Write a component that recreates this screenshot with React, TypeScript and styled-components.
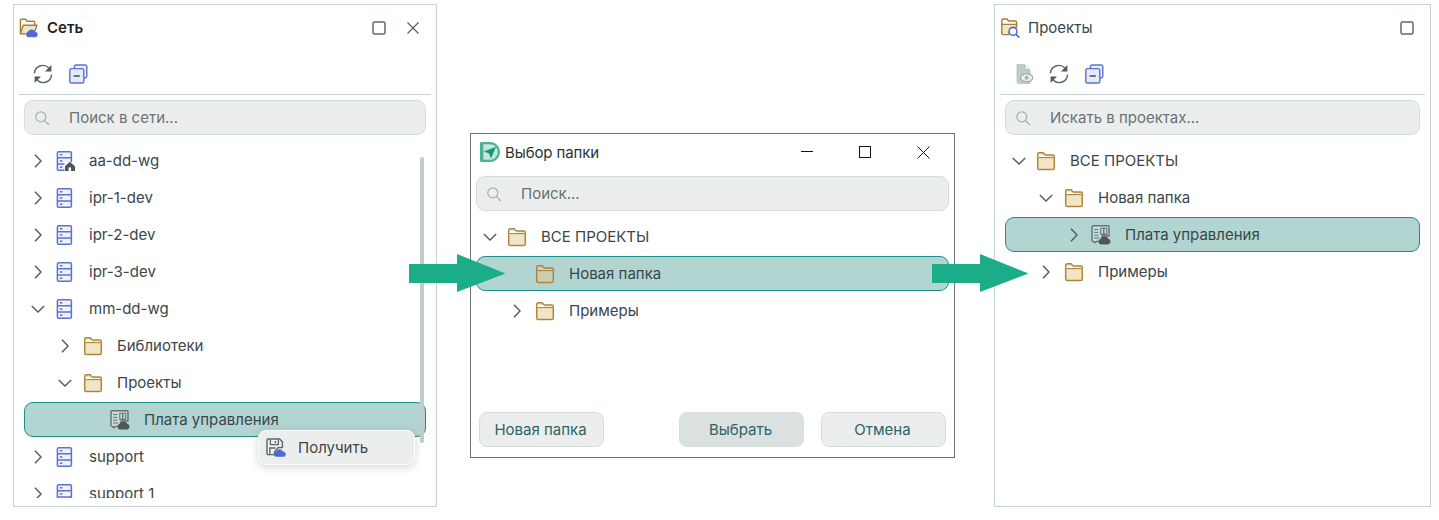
import React from "react";
import styled, { createGlobalStyle } from "styled-components";

const Global = createGlobalStyle`
  html, body { margin: 0; padding: 0; background: #fff; }
  body { font-family: Inter, "Noto Sans", "Liberation Sans", sans-serif; font-size: 15px; color: #3a4749; }
  #root { width: 1439px; height: 520px; overflow: hidden; }
`;

const Page = styled.div`
  position: relative;
  display: flex;
  align-items: flex-start;
  width: 1439px;
  height: 520px;
  padding: 4px 0 0 13px;
  box-sizing: border-box;
  overflow: hidden;
  background: #fff;
`;

const Panel = styled.section<{ $width: number; $gap: number }>`
  position: relative;
  display: flex;
  flex-direction: column;
  flex: none;
  box-sizing: border-box;
  width: ${(p) => p.$width}px;
  height: 503px;
  margin-left: ${(p) => p.$gap}px;
  border: 1px solid #c5d3d1;
`;

const Dialog = styled.section`
  display: flex;
  flex-direction: column;
  flex: none;
  box-sizing: border-box;
  width: 485px;
  height: 325px;
  margin: 129px 0 0 33px;
  border: 1px solid #707070;
`;

const TitleBar = styled.header`
  display: flex;
  align-items: center;
  flex: none;
  box-sizing: border-box;
  height: 46px;
  padding: 0 6px 1px 5px;
`;

const TitleText = styled.span<{ $bold?: boolean }>`
  margin-left: 8px;
  color: ${(p) => (p.$bold ? "#1d2325" : "#3a4749")};
  font-weight: ${(p) => (p.$bold ? 600 : 400)};
`;

const TitleButtons = styled.div`
  display: flex;
  margin-left: auto;
`;

const TitleButton = styled.button`
  display: flex;
  align-items: center;
  justify-content: center;
  width: 34px;
  height: 34px;
  padding: 0;
  border: 0;
  background: none;
`;

const DialogTitleBar = styled.header`
  display: flex;
  align-items: center;
  flex: none;
  height: 36px;
  padding: 0 2px 0 9px;
`;

const DialogTitleText = styled.span`
  margin-left: 5px;
  color: #2a3436;
  letter-spacing: -0.1px;
`;

const WindowButton = styled.button`
  display: flex;
  align-items: center;
  justify-content: center;
  width: 58px;
  height: 36px;
  padding: 0;
  border: 0;
  background: none;
`;

const Toolbar = styled.div`
  display: flex;
  align-items: center;
  flex: none;
  gap: 15px;
  height: 41px;
  margin: 0 5px;
  padding: 2px 0 0 14px;
  border-bottom: 1px solid #c5d3d1;
`;

const Search = styled.div<{ $top: number }>`
  display: flex;
  align-items: center;
  flex: none;
  gap: 19px;
  box-sizing: border-box;
  height: 35px;
  margin: ${(p) => p.$top}px 5px 8px;
  padding-left: 9px;
  border: 1px solid #d4dedc;
  border-radius: 9px;
  background: #ebeeed;
  color: #687375;
`;

const PanelSearch = styled(Search)`
  margin-left: 10px;
  margin-right: 10px;
`;

const Tree = styled.div<{ $inset: number }>`
  display: flex;
  flex-direction: column;
  flex: none;
  gap: 2px;
  height: 355px;
  margin: 0 ${(p) => p.$inset}px;
  overflow: hidden;
`;

const DialogTree = styled(Tree)`
  flex: 1;
  height: auto;
`;

const Row = styled.div<{ $level: number; $selected?: boolean }>`
  display: flex;
  align-items: center;
  flex: none;
  box-sizing: border-box;
  height: 35px;
  padding-left: ${(p) => 5 + [0, 27, 55][p.$level]}px;
  border: 1px solid ${(p) => (p.$selected ? "#1d8f8b" : "transparent")};
  border-radius: 9px;
  background: ${(p) => (p.$selected ? "#b2d5d2" : "transparent")};
`;

const Chevron = styled.span<{ $level: number }>`
  display: flex;
  align-items: center;
  justify-content: center;
  flex: none;
  width: 16px;
  height: 16px;
  margin-right: ${(p) => (p.$level === 1 ? 10 : 9)}px;
`;

const RowIcon = styled.span`
  display: flex;
  flex: none;
  width: 20px;
  height: 20px;
  margin-right: 14px;
`;

const Footer = styled.footer`
  display: flex;
  flex: none;
  gap: 17px;
  padding: 0 8px 10px;
`;

const Button = styled.button<{ $primary?: boolean; $push?: boolean }>`
  box-sizing: border-box;
  width: 125px;
  height: 35px;
  margin-left: ${(p) => (p.$push ? "auto" : 0)};
  padding: 0 2px 0 0;
  border: 1px solid #d4dedc;
  border-radius: 8px;
  background: ${(p) => (p.$primary ? "#dbe0e0" : "#ebeeed")};
  color: #2c6468;
  font: inherit;
`;

const Scrollbar = styled.div`
  position: absolute;
  left: 406px;
  top: 152px;
  width: 4px;
  height: 286px;
  border-radius: 2px;
  background: #c0cdcc;
`;

const ContextMenu = styled.div`
  position: absolute;
  left: 244px;
  top: 425px;
  display: flex;
  align-items: center;
  gap: 12px;
  box-sizing: border-box;
  width: 157px;
  height: 35px;
  padding-left: 7px;
  border: 1px solid #fff;
  border-radius: 8px;
  background: #ebeeed;
  box-shadow: 0 2px 8px rgba(40, 60, 60, 0.22);
`;

const FlowArrow = styled.svg<{ $left: number }>`
  position: absolute;
  left: ${(p) => p.$left}px;
  top: 254px;
`;

const Folder = ({ dim }: { dim?: boolean }) => (
  <svg width="20" height="20" viewBox="0 0 20 20">
    <path
      d="M1.7 17V3.4C1.7 2.5 2.4 1.8 3.3 1.8H7.2L9 3.9H16.7C17.6 3.9 18.3 4.6 18.3 5.5V17C18.3 17.9 17.6 18.6 16.7 18.6H3.3C2.4 18.6 1.7 17.9 1.7 17Z"
      fill={dim ? "#cccfae" : "#f1e5c6"}
      stroke="#ab863f"
      strokeWidth="1.5"
    />
    <path d="M2.6 4.2H8.6L9.8 5.8H17.4V6.2H2.6Z" fill={dim ? "#b2d5d2" : "#fff"} />
    <path d="M2.4 6.6H17.6" stroke="#ab863f" strokeWidth="1.1" fill="none" />
  </svg>
);

const Server = ({ home }: { home?: boolean }) => (
  <svg width="20" height="20" viewBox="0 0 20 20">
    <rect x="2.4" y="0.8" width="14" height="18.4" rx="1.3" fill="#f0f3fd" stroke="#5a72d6" strokeWidth="1.5" />
    <path d="M2.6 6.8H16.2M2.6 13H16.2" stroke="#5a72d6" strokeWidth="1.5" />
    <path d="M4.9 3.8H7.4M4.9 10H7.4M4.9 16.2H7.4" stroke="#6b7678" strokeWidth="1.4" />
    {home && (
      <g>
        <rect x="9.5" y="11" width="10.5" height="9" fill="#fff" />
        <path d="M14.8 10.8L20 15.2V20H10V15.2Z" fill="#4c5658" />
        <rect x="13.6" y="16.4" width="2.4" height="3.6" fill="#fff" />
      </g>
    )}
  </svg>
);

const Board = () => (
  <svg width="20" height="20" viewBox="0 0 20 20" fill="none">
    <path d="M1 1.8C1 1.2 1.4.8 2 .8H17C17.6.8 18 1.2 18 1.8V11H11V16.4H5.6L4 17.8L2.4 16.4H2C1.4 16.4 1 16 1 15.4Z" fill="#c5dcd9" stroke="#667274" strokeWidth="1.4" strokeLinejoin="round" />
    <path d="M3.2 4.6H7.4M3.2 7.4H7.4M3.2 10.2H7.4M3.2 13H8.6" stroke="#667274" strokeWidth="1" />
    <path d="M9.8 3.2H15.8V9.4H9.8Z" stroke="#667274" strokeWidth="1.1" />
    <path d="M12.8 3.4V9" stroke="#667274" strokeWidth="1.4" />
    <path d="M10 19.4A2.9 2.9 0 0 1 9.8 13.7A4.2 4.2 0 0 1 17.4 13.8A2.9 2.9 0 0 1 17.4 19.4Z" fill="#4d585a" />
  </svg>
);

const Chev = ({ open }: { open?: boolean }) => (
  <svg width="16" height="16" viewBox="0 0 16 16" fill="none" stroke="#4f5b5d" strokeWidth="1.4">
    {open ? <path d="M1.8 5L8 11L14.2 5" /> : <path d="M5 1.8L11 8L5 14.2" />}
  </svg>
);

const GlassIcon = styled.svg`
  flex: none;
`;

const SearchGlass = () => (
  <GlassIcon width="16" height="16" viewBox="0 0 16 16" fill="none" stroke="#a7b0b1" strokeWidth="1.2">
    <circle cx="6.8" cy="6.8" r="5" />
    <path d="M10.5 10.5L15 15" />
  </GlassIcon>
);

const Refresh = () => (
  <svg width="20" height="20" viewBox="0 0 20 20" fill="none">
    <path d="M1.4 9.4A8.4 8.4 0 0 1 15.8 4" stroke="#5a6668" strokeWidth="1.4" />
    <path d="M18.6 10.6A8.4 8.4 0 0 1 4.2 16" stroke="#5a6668" strokeWidth="1.4" />
    <path d="M18.4 1V7.4H12Z" fill="#4f5b5d" />
    <path d="M1.6 19V12.6H8Z" fill="#4f5b5d" />
  </svg>
);

const Collapse = () => (
  <svg width="20" height="20" viewBox="0 0 20 20" fill="none" stroke="#5a72d6" strokeWidth="1.4">
    <path d="M6.4 4.2V2.6C6.4 1.7 7.1 1 8 1H17.2C18.1 1 18.8 1.7 18.8 2.6V12.2C18.8 13.1 18.1 13.8 17.2 13.8H15.8" fill="#eef1fc" />
    <rect x="1.8" y="4.6" width="14" height="14.4" rx="1.8" fill="#e6ebfb" />
    <path d="M5.6 12H11.8" stroke="#4f5b5d" strokeWidth="1.6" />
  </svg>
);

const FolderCloud = () => (
  <svg width="20" height="20" viewBox="0 0 20 20">
    <path d="M1.4 15.5V2.6C1.4 1.8 2 1.2 2.8 1.2H6.6L8.2 3.2H14.4C15.2 3.2 15.8 3.8 15.8 4.6V7" fill="#fff" stroke="#a67f3a" strokeWidth="1.4" />
    <path d="M1.4 15.8L4.2 7.2H18L15 15.8Z" fill="#f1e5c6" stroke="#a67f3a" strokeWidth="1.4" strokeLinejoin="round" />
    <path d="M9 19.4A3 3 0 0 1 8.8 13.6A4.3 4.3 0 0 1 16.6 13.6A3 3 0 0 1 17 19.4Z" fill="#4e68d4" stroke="#fff" strokeWidth="0.6" />
  </svg>
);

const FolderLens = () => (
  <svg width="20" height="20" viewBox="0 0 20 20" fill="none">
    <path d="M1.8 16V2.4C1.8 1.6 2.4 1 3.2 1H7L8.6 3H15.2C16 3 16.6 3.6 16.6 4.4V8" fill="#fff" stroke="#a67f3a" strokeWidth="1.4" />
    <path d="M1.8 6.4H16.6V9.4H11L8.6 16.6H3.2C2.4 16.6 1.8 16 1.8 15.2Z" fill="#f1e5c6" stroke="#a67f3a" strokeWidth="1.3" />
    <circle cx="13" cy="13.4" r="3.9" fill="#fff" stroke="#4e68d4" strokeWidth="1.5" />
    <path d="M15.8 16.2L19.4 19.6" stroke="#4e68d4" strokeWidth="1.6" />
  </svg>
);

const FileEye = () => (
  <svg width="20" height="20" viewBox="0 0 20 20">
    <path d="M3 .6H10.6L16 5.8V19.4H4.4C3.6 19.4 3 18.8 3 18Z" fill="#c3ccca" stroke="#b4bdbc" strokeWidth="0.8" />
    <path d="M10.6.8V5.8H15.8" fill="#e6eae9" stroke="#aab4b3" strokeWidth="0.8" />
    <ellipse cx="12.6" cy="13.8" rx="6.2" ry="4" fill="#e9eded" stroke="#98a3a2" strokeWidth="1.1" />
    <circle cx="12.6" cy="13.8" r="2" fill="#aab4b3" />
  </svg>
);

const SaveCloud = () => (
  <svg width="20" height="20" viewBox="0 0 20 20" fill="none">
    <path d="M1 2.2C1 1.5 1.5 1 2.2 1H13.6L16.4 3.8V9.6H12L8.6 13.6V16.6H2.2C1.5 16.6 1 16.1 1 15.4Z" fill="#eef0f0" stroke="#5a6769" strokeWidth="1.4" strokeLinejoin="round" />
    <path d="M4.4 1.4V6.6H12.4V1.4" stroke="#5a6769" strokeWidth="1.3" />
    <path d="M9.4 3V5.2" stroke="#5a6769" strokeWidth="1.4" />
    <path d="M3.8 16.4V10H9.4" stroke="#5a6769" strokeWidth="1.3" />
    <path d="M9.8 18.8A2.8 2.8 0 0 1 9.8 13.4A3.9 3.9 0 0 1 16.8 13.4A2.7 2.7 0 0 1 17.2 18.8Z" fill="#4e68d4" />
  </svg>
);

const Logo = () => (
  <svg width="20" height="20" viewBox="0 0 20 20">
    <path d="M0 1.4C0 .6.6 0 1.4 0H10C15.5 0 20 4.5 20 10S15.5 20 10 20H1.4C.6 20 0 19.4 0 18.6Z" fill="#4bb295" />
    <path d="M3.4 2.2H9.8C14.2 2.2 17.8 5.7 17.8 10S14.2 17.8 9.8 17.8H3.4Z" fill="#c9e6dc" />
    <path d="M16 4.8L11 16.6L9 11.4L3.8 9.6Z" fill="#159a77" />
  </svg>
);

const GreenArrow = ({ left }: { left: number }) => (
  <FlowArrow $left={left} width="97" height="38" viewBox="0 0 97 38">
    <path d="M0 10H48V0L96.5 19.5L48 38V29H0Z" fill="#1bad88" />
  </FlowArrow>
);

type Item = {
  label: string;
  level: number;
  chevron?: "open" | "closed";
  icon: React.ReactNode;
  selected?: boolean;
};

const TreeRow = ({ label, level, chevron, icon, selected }: Item) => (
  <Row $level={level} $selected={selected}>
    <Chevron $level={level}>{chevron && <Chev open={chevron === "open"} />}</Chevron>
    <RowIcon>{icon}</RowIcon>
    <span>{label}</span>
  </Row>
);

const networkItems: Item[] = [
  { label: "aa-dd-wg", level: 0, chevron: "closed", icon: <Server home /> },
  { label: "ipr-1-dev", level: 0, chevron: "closed", icon: <Server /> },
  { label: "ipr-2-dev", level: 0, chevron: "closed", icon: <Server /> },
  { label: "ipr-3-dev", level: 0, chevron: "closed", icon: <Server /> },
  { label: "mm-dd-wg", level: 0, chevron: "open", icon: <Server /> },
  { label: "Библиотеки", level: 1, chevron: "closed", icon: <Folder /> },
  { label: "Проекты", level: 1, chevron: "open", icon: <Folder /> },
  { label: "Плата управления", level: 2, icon: <Board />, selected: true },
  { label: "support", level: 0, chevron: "closed", icon: <Server /> },
  { label: "support 1", level: 0, chevron: "closed", icon: <Server /> },
];

const dialogItems: Item[] = [
  { label: "ВСЕ ПРОЕКТЫ", level: 0, chevron: "open", icon: <Folder /> },
  { label: "Новая папка", level: 1, icon: <Folder dim />, selected: true },
  { label: "Примеры", level: 1, chevron: "closed", icon: <Folder /> },
];

const projectItems: Item[] = [
  { label: "ВСЕ ПРОЕКТЫ", level: 0, chevron: "open", icon: <Folder /> },
  { label: "Новая папка", level: 1, chevron: "open", icon: <Folder /> },
  { label: "Плата управления", level: 2, chevron: "closed", icon: <Board />, selected: true },
  { label: "Примеры", level: 1, chevron: "closed", icon: <Folder /> },
];

const Maximize = () => (
  <svg width="14" height="14" viewBox="0 0 14 14" fill="none">
    <rect x="1" y="1" width="12" height="12" rx="1.5" stroke="#5f6b6d" strokeWidth="1.5" />
  </svg>
);

const CloseGlyph = () => (
  <svg width="14" height="14" viewBox="0 0 14 14" fill="none" stroke="#4f5b5d" strokeWidth="1.1">
    <path d="M1.5 1.5L12.5 12.5M12.5 1.5L1.5 12.5" />
  </svg>
);

export default function App() {
  return (
    <Page>
      <Global />
      <Panel $width={424} $gap={0}>
        <TitleBar>
          <FolderCloud />
          <TitleText $bold>Сеть</TitleText>
          <TitleButtons>
            <TitleButton><Maximize /></TitleButton>
            <TitleButton><CloseGlyph /></TitleButton>
          </TitleButtons>
        </TitleBar>
        <Toolbar>
          <Refresh />
          <Collapse />
        </Toolbar>
        <PanelSearch $top={5}>
          <SearchGlass />
          <span>Поиск в сети...</span>
        </PanelSearch>
        <Tree $inset={10}>
          {networkItems.map((item) => <TreeRow key={item.label} {...item} />)}
        </Tree>
        <Scrollbar />
        <ContextMenu>
          <SaveCloud />
          <span>Получить</span>
        </ContextMenu>
      </Panel>

      <Dialog>
        <DialogTitleBar>
          <Logo />
          <DialogTitleText>Выбор папки</DialogTitleText>
          <TitleButtons>
            <WindowButton>
              <svg width="12" height="12" viewBox="0 0 12 12"><path d="M0 5.5H12" stroke="#111" strokeWidth="1" /></svg>
            </WindowButton>
            <WindowButton>
              <svg width="12" height="12" viewBox="0 0 12 12" fill="none"><rect x=".5" y=".5" width="11" height="11" stroke="#111" /></svg>
            </WindowButton>
            <WindowButton>
              <svg width="13" height="13" viewBox="0 0 13 13" fill="none" stroke="#111"><path d="M.5.5L12.5 12.5M12.5.5L.5 12.5" /></svg>
            </WindowButton>
          </TitleButtons>
        </DialogTitleBar>
        <Search $top={6}>
          <SearchGlass />
          <span>Поиск...</span>
        </Search>
        <DialogTree $inset={5}>
          {dialogItems.map((item) => <TreeRow key={item.label} {...item} />)}
        </DialogTree>
        <Footer>
          <Button>Новая папка</Button>
          <Button $primary $push>Выбрать</Button>
          <Button>Отмена</Button>
        </Footer>
      </Dialog>

      <Panel $width={437} $gap={39}>
        <TitleBar>
          <FolderLens />
          <TitleText>Проекты</TitleText>
          <TitleButtons>
            <TitleButton><Maximize /></TitleButton>
          </TitleButtons>
        </TitleBar>
        <Toolbar>
          <FileEye />
          <Refresh />
          <Collapse />
        </Toolbar>
        <PanelSearch $top={5}>
          <SearchGlass />
          <span>Искать в проектах...</span>
        </PanelSearch>
        <Tree $inset={10}>
          {projectItems.map((item) => <TreeRow key={item.label} {...item} />)}
        </Tree>
      </Panel>

      <GreenArrow left={409} />
      <GreenArrow left={932} />
    </Page>
  );
}
